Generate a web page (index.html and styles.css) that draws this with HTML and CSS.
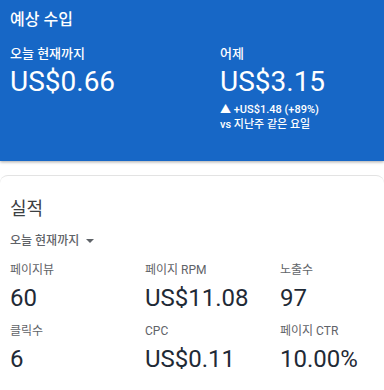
FILE: index.html
```html
<!DOCTYPE html>
<html lang="ko">
<head>
  <meta charset="UTF-8" />
  <meta name="viewport" content="width=device-width, initial-scale=1.0" />
  <title>예상 수입</title>
  <link rel="stylesheet" href="styles.css">
</head>
<body>
  <div class="earnings">
    <h2 class="earnings-title">예상 수입</h2>
    <div class="earnings-row">
      <div class="earnings-col">
        <div class="earnings-label">오늘 현재까지</div>
        <div class="earnings-value">US$0.66</div>
      </div>
      <div class="earnings-col">
        <div class="earnings-label">어제</div>
        <div class="earnings-value">US$3.15</div>
        <div class="earnings-change">▲ +US$1.48 (+89%)</div>
        <div class="earnings-change">vs 지난주 같은 요일</div>
      </div>
    </div>
  </div>

  <div class="card">
    <h3 class="card-title">실적</h3>
    <div class="range">오늘 현재까지 <span class="caret"></span></div>
    <div class="stats">
      <div class="stat">
        <div class="stat-label">페이지뷰</div>
        <div class="stat-value">60</div>
      </div>
      <div class="stat">
        <div class="stat-label">페이지 RPM</div>
        <div class="stat-value">US$11.08</div>
      </div>
      <div class="stat">
        <div class="stat-label">노출수</div>
        <div class="stat-value">97</div>
      </div>
      <div class="stat">
        <div class="stat-label">클릭수</div>
        <div class="stat-value">6</div>
      </div>
      <div class="stat">
        <div class="stat-label">CPC</div>
        <div class="stat-value">US$0.11</div>
      </div>
      <div class="stat">
        <div class="stat-label">페이지 CTR</div>
        <div class="stat-value">10.00%</div>
      </div>
    </div>
  </div>
</body>
</html>
```

FILE: styles.css
```css
body {
  margin: 0;
  font-family: Roboto, "Noto Sans CJK KR", sans-serif;
  background: #fff;
  overflow: hidden;
}
.earnings {
  background: #1767c6;
  color: #fff;
  height: 161px;
  box-sizing: border-box;
  padding: 10px 10px 0 10px;
  box-shadow: 0 1px 3px rgba(0, 0, 0, 0.35);
}
.earnings-title {
  margin: 0;
  font-size: 16px;
  font-weight: 500;
  line-height: 20px;
}
.earnings-row {
  display: grid;
  grid-template-columns: 210px auto;
  margin-top: 16px;
}
.earnings-label {
  font-size: 13px;
  font-weight: 500;
  line-height: 16px;
}
.earnings-value {
  font-size: 28px;
  line-height: 32px;
  margin-top: 4px;
  margin-bottom: 4px;
}
.earnings-change {
  font-size: 11px;
  font-weight: 500;
  line-height: 15px;
}
.card {
  margin-top: 14px;
  border-top: 1px solid #e3e3e3;
  border-radius: 8px 8px 0 0;
  padding: 0 10px;
}
.card-title {
  margin: 22px 0 0 0;
  font-size: 18px;
  font-weight: 400;
  line-height: 22px;
  color: #3c4043;
}
.range {
  margin-top: 13px;
  font-size: 12px;
  line-height: 16px;
  color: #5f6368;
  font-weight: 500;
}
.caret {
  display: inline-block;
  width: 0;
  height: 0;
  border-left: 4px solid transparent;
  border-right: 4px solid transparent;
  border-top: 4px solid #5f6368;
  margin-left: 4px;
  vertical-align: 2px;
}
.stats {
  display: grid;
  grid-template-columns: 135px 135px auto;
  margin-top: 13px;
  row-gap: 11px;
}
.stat-label {
  font-size: 12px;
  line-height: 16px;
  color: #5f6368;
}
.stat-value {
  font-size: 24px;
  line-height: 28px;
  margin-top: 6px;
  color: #1f2a36;
}
```
